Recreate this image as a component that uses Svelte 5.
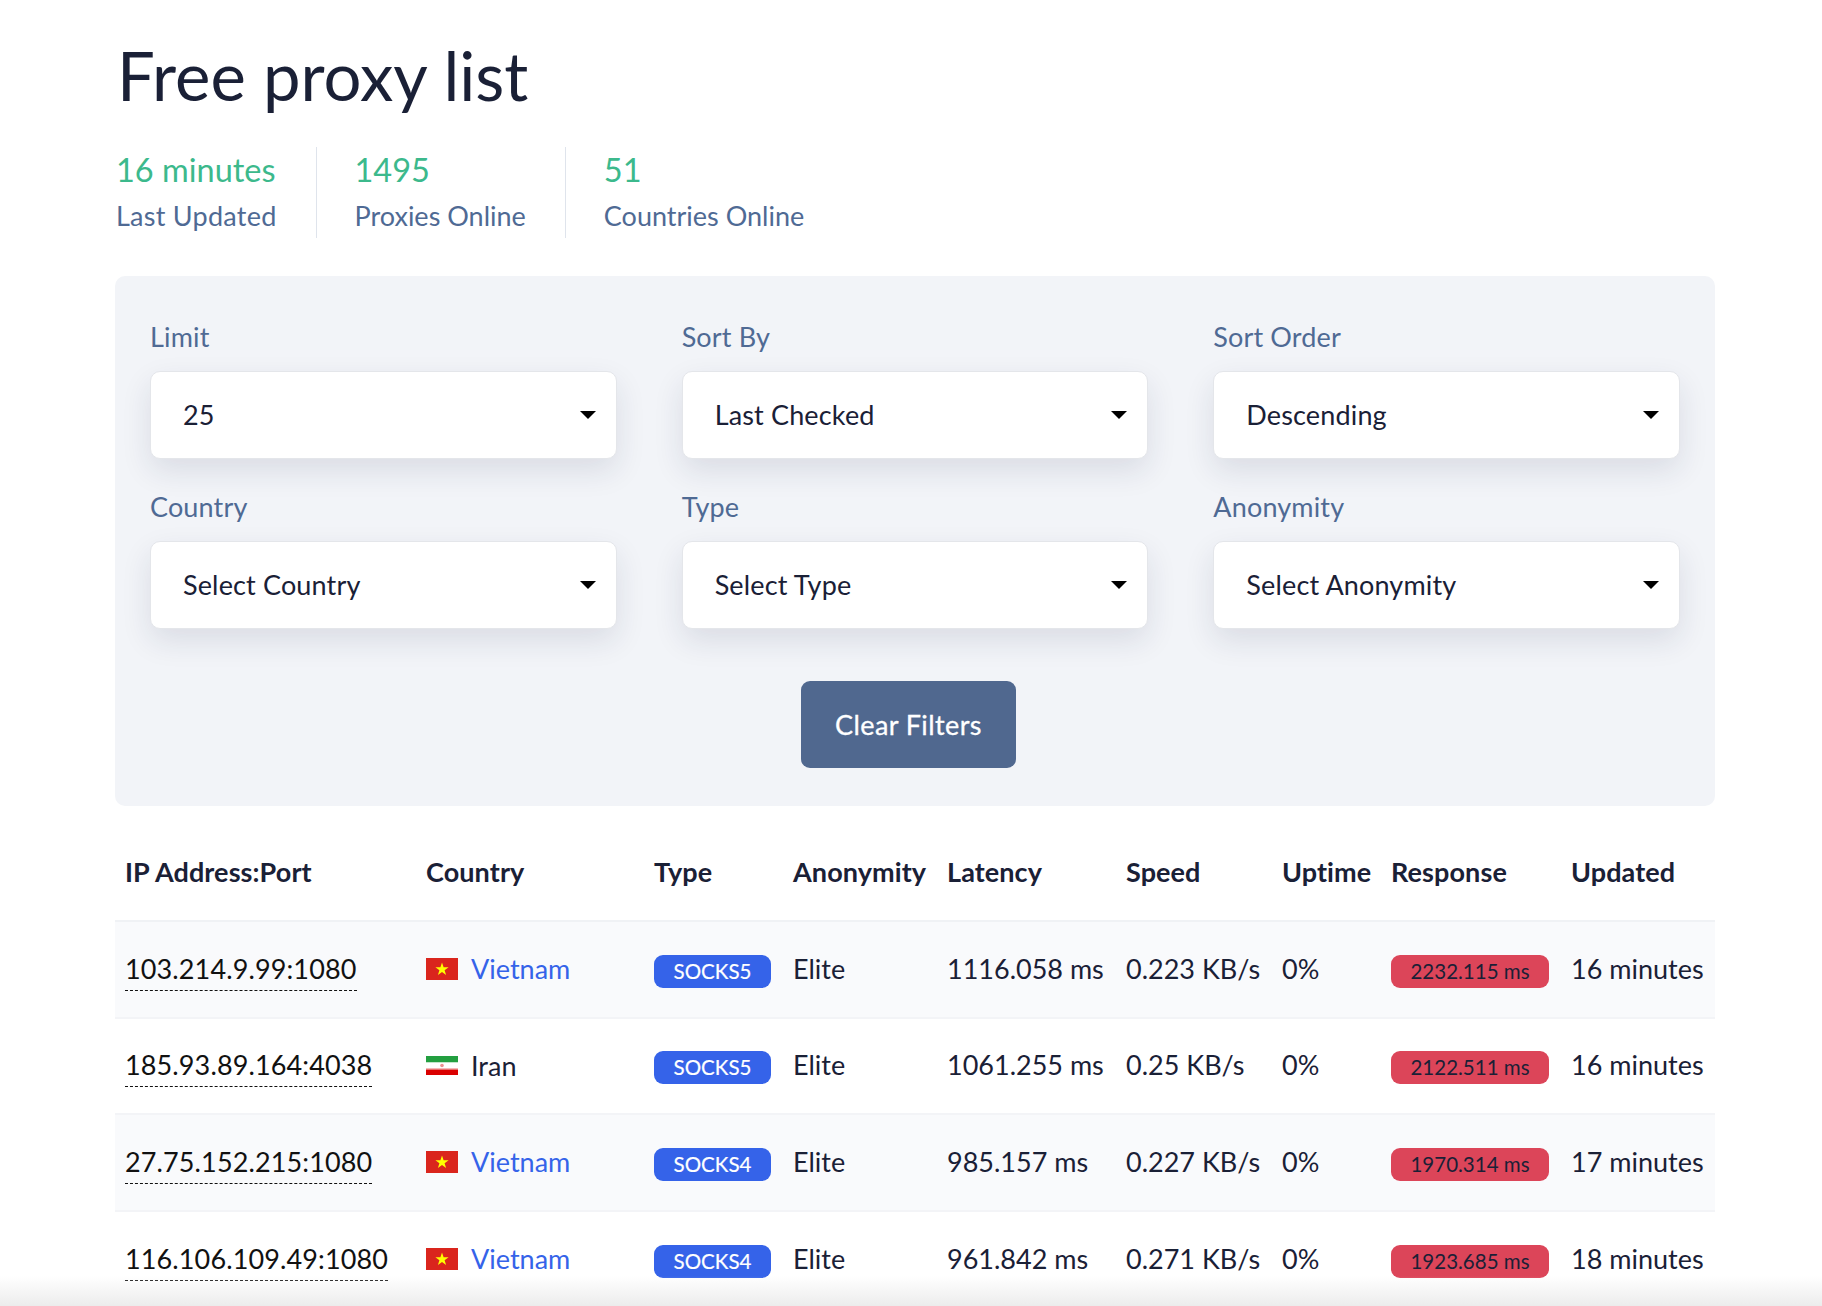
<script>
	const stats = [
		{ value: '16 minutes', label: 'Last Updated' },
		{ value: '1495', label: 'Proxies Online' },
		{ value: '51', label: 'Countries Online' }
	];

	const filters = [
		{ label: 'Limit', value: '25' },
		{ label: 'Sort By', value: 'Last Checked' },
		{ label: 'Sort Order', value: 'Descending' },
		{ label: 'Country', value: 'Select Country' },
		{ label: 'Type', value: 'Select Type' },
		{ label: 'Anonymity', value: 'Select Anonymity' }
	];

	const columns = ['IP Address:Port', 'Country', 'Type', 'Anonymity', 'Latency', 'Speed', 'Uptime', 'Response', 'Updated'];

	const proxies = [
		{ ip: '103.214.9.99:1080', country: 'Vietnam', type: 'SOCKS5', latency: '1116.058 ms', speed: '0.223 KB/s', response: '2232.115 ms', updated: '16 minutes' },
		{ ip: '185.93.89.164:4038', country: 'Iran', type: 'SOCKS5', latency: '1061.255 ms', speed: '0.25 KB/s', response: '2122.511 ms', updated: '16 minutes' },
		{ ip: '27.75.152.215:1080', country: 'Vietnam', type: 'SOCKS4', latency: '985.157 ms', speed: '0.227 KB/s', response: '1970.314 ms', updated: '17 minutes' },
		{ ip: '116.106.109.49:1080', country: 'Vietnam', type: 'SOCKS4', latency: '961.842 ms', speed: '0.271 KB/s', response: '1923.685 ms', updated: '18 minutes' }
	];
</script>

<div class="page">
	<h1>Free proxy list</h1>

	<div class="stats">
		{#each stats as stat}
			<div class="stat">
				<div class="stat-value">{stat.value}</div>
				<div class="stat-label">{stat.label}</div>
			</div>
		{/each}
	</div>

	<div class="filters">
		<div class="filter-grid">
			{#each filters as filter}
				<div class="filter">
					<div class="filter-label">{filter.label}</div>
					<div class="select">
						<select>
							<option>{filter.value}</option>
						</select>
					</div>
				</div>
			{/each}
		</div>
		<div class="actions">
			<button class="clear">Clear Filters</button>
		</div>
	</div>

	<table>
		<colgroup>
			<col class="c-ip" />
			<col class="c-country" />
			<col class="c-type" />
			<col class="c-anon" />
			<col class="c-latency" />
			<col class="c-speed" />
			<col class="c-uptime" />
			<col class="c-response" />
			<col class="c-updated" />
		</colgroup>
		<thead>
			<tr>
				{#each columns as column}
					<th>{column}</th>
				{/each}
			</tr>
		</thead>
		<tbody>
			{#each proxies as proxy}
				<tr>
					<td><span class="ip">{proxy.ip}</span></td>
					<td>
						<div class="country">
							{#if proxy.country === 'Vietnam'}
								<svg class="flag" width="32" height="22" viewBox="0 0 32 22">
									<rect width="32" height="22" fill="#da251d" />
									<polygon points="16,4.5 17.6,9.2 22.6,9.2 18.6,12.2 20.1,17 16,14.1 11.9,17 13.4,12.2 9.4,9.2 14.4,9.2" fill="#ffff00" />
								</svg>
								<span class="link">{proxy.country}</span>
							{:else}
								<svg class="flag" width="32" height="19" viewBox="0 0 32 19">
									<rect width="32" height="19" fill="#ffffff" />
									<rect width="32" height="6" fill="#239f40" />
									<rect y="6" width="32" height="1" fill="#c4e4cb" />
									<rect y="12" width="32" height="1.5" fill="#f3b9b9" />
									<rect y="13.5" width="32" height="5.5" fill="#da0000" />
									<circle cx="16" cy="9.5" r="1.8" fill="#eb8f8f" />
								</svg>
								<span>{proxy.country}</span>
							{/if}
						</div>
					</td>
					<td><span class="badge socks">{proxy.type}</span></td>
					<td>Elite</td>
					<td>{proxy.latency}</td>
					<td>{proxy.speed}</td>
					<td>0%</td>
					<td><span class="badge response">{proxy.response}</span></td>
					<td>{proxy.updated}</td>
				</tr>
			{/each}
		</tbody>
	</table>

	<div class="fade"></div>
</div>

<style>
	:global(body) {
		margin: 0;
		background: #fff;
	}

	.page {
		position: relative;
		box-sizing: border-box;
		height: 1306px;
		overflow: hidden;
		padding: 0 107px 0 115px;
		font-family: Lato, "Open Sans", sans-serif;
		color: #1a2036;
	}

	h1 {
		margin: 0;
		padding: 35px 0 0 2px;
		font-size: 67px;
		line-height: 80px;
		font-weight: 400;
	}

	.stats {
		display: flex;
		margin-top: 32px;
	}

	.stat {
		height: 91px;
		padding: 0 39px 0 38px;
		border-right: 1px solid #dfe4ec;
	}

	.stat:first-child {
		padding-left: 1px;
	}

	.stat:first-child .stat-label {
		letter-spacing: 0.25px;
	}

	.stat:last-child {
		border-right: none;
	}

	.stat-value {
		margin-top: 1px;
		font-size: 32.5px;
		line-height: 44px;
		color: #3cb98c;
	}

	.stat-label {
		padding-top: 3px;
		font-size: 27px;
		line-height: 42px;
		color: #4f6a94;
	}

	.filters {
		margin-top: 38px;
		padding: 35px 35px 38px;
		background: #f2f4f8;
		border-radius: 10px;
	}

	.filter-grid {
		display: grid;
		grid-template-columns: repeat(3, 1fr);
		column-gap: 65px;
	}

	.filter {
		height: 170px;
	}

	.filter-label {
		padding-top: 6px;
		margin-bottom: 15px;
		font-size: 27px;
		line-height: 39px;
		letter-spacing: 0.15px;
		color: #4f6a94;
	}

	.select {
		position: relative;
	}

	.select::after {
		content: '';
		position: absolute;
		right: 21px;
		top: 40px;
		border-left: 8px solid transparent;
		border-right: 8px solid transparent;
		border-top: 8px solid #000;
	}

	select {
		display: block;
		appearance: none;
		box-sizing: border-box;
		width: 100%;
		height: 88px;
		padding: 0 32px 2px;
		background: #fff;
		border: 1px solid #e4e6ea;
		border-radius: 10px;
		box-shadow: 0 12px 30px rgba(30, 40, 70, 0.11);
		font: inherit;
		font-size: 27px;
		letter-spacing: 0.15px;
		color: #1a2036;
	}

	.actions {
		display: flex;
		justify-content: center;
		margin-top: 30px;
		padding-right: 13px;
	}

	.clear {
		width: 215px;
		height: 87px;
		padding-bottom: 2px;
		background: #50688f;
		border: none;
		border-radius: 9px;
		font: inherit;
		font-size: 27px;
		letter-spacing: 0.4px;
		color: #fff;
		-webkit-text-stroke: 0.3px #fff;
	}

	table {
		width: 1600px;
		border-collapse: collapse;
		table-layout: fixed;
		font-size: 27px;
	}

	.c-ip { width: 301px; }
	.c-country { width: 228px; }
	.c-type { width: 139px; }
	.c-anon { width: 154px; }
	.c-latency { width: 179px; }
	.c-speed { width: 156px; }
	.c-uptime { width: 109px; }
	.c-response { width: 180px; }
	.c-updated { width: 154px; }

	th {
		height: 98px;
		padding: 16px 0 0 10px;
		text-align: left;
		font-weight: 700;
		letter-spacing: 0.1px;
		white-space: nowrap;
		border-bottom: 2px solid #f0f2f5;
	}

	td {
		height: 92.6px;
		padding: 0 0 2px 10px;
		white-space: nowrap;
		border-bottom: 2px solid #f3f4f7;
	}

	tbody tr:nth-child(odd) {
		background: #f9fafc;
	}

	.ip {
		display: inline-block;
		margin-top: 3px;
		line-height: 39px;
		padding-bottom: 2px;
		letter-spacing: 0.12px;
		color: #111;
		border-bottom: 1px dashed #111;
	}

	.country {
		display: flex;
		align-items: center;
		gap: 13px;
		padding-top: 1px;
	}

	.flag {
		flex-shrink: 0;
	}

	.link {
		color: #3563e9;
	}

	.badge {
		display: inline-block;
		height: 33px;
		line-height: 33px;
		margin-top: 6px;
		vertical-align: -2px;
		text-align: center;
		border-radius: 9px;
		font-size: 20.5px;
	}

	.socks {
		width: 117px;
		background: #3563e9;
		color: #fff;
		-webkit-text-stroke: 0.2px #fff;
	}

	.response {
		width: 158px;
		background: #dc4559;
		color: #1a2036;
	}

	.fade {
		position: absolute;
		left: 0;
		right: 0;
		bottom: 0;
		height: 30px;
		background: linear-gradient(rgba(236, 236, 236, 0), rgba(236, 236, 236, 1));
	}
</style>
